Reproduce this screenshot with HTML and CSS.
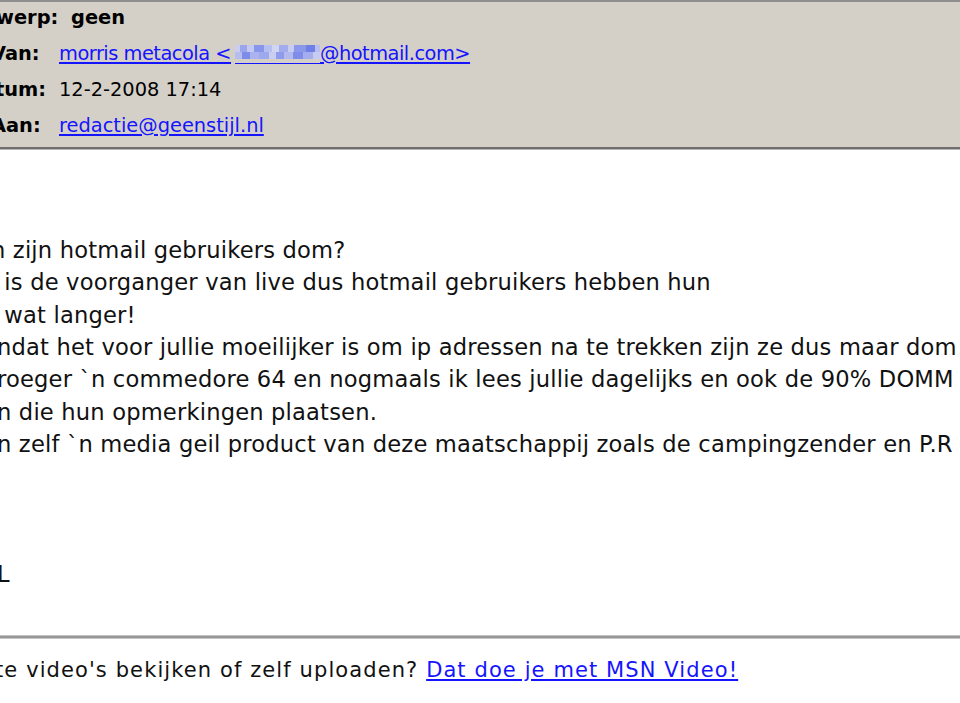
FILE: index.html
```html
<!DOCTYPE html>
<html lang="nl">
<head>
<meta charset="utf-8">
<title>geen</title>
<link rel="stylesheet" href="styles.css">
</head>
<body>
<div class="page">
  <header class="header">
    <div class="hrow hrow--subject"><span class="label label--inset-lg">werp:</span><span class="subject">geen</span></div>
    <div class="hrow"><span class="label">Van:</span><span class="value"><a class="link link--tight" href="#">morris metacola &lt;<span class="blur"></span>@hotmail.com&gt;</a></span></div>
    <div class="hrow"><span class="label label--inset">tum:</span><span class="value">12-2-2008 17:14</span></div>
    <div class="hrow"><span class="label">Aan:</span><span class="value"><a class="link" href="#">redactie@geenstijl.nl</a></span></div>
  </header>
  <main class="message">
    <div class="line line--shift">n zijn hotmail gebruikers dom?</div>
    <div class="line"> is de voorganger van live dus hotmail gebruikers hebben hun</div>
    <div class="line"> wat langer!</div>
    <div class="line">ndat het voor jullie moeilijker is om ip adressen na te trekken zijn ze dus maar dom</div>
    <div class="line">roeger `n commedore 64 en nogmaals ik lees jullie dagelijks en ook de 90% DOMM</div>
    <div class="line">n die hun opmerkingen plaatsen.</div>
    <div class="line">n zelf `n media geil product van deze maatschappij zoals de campingzender en P.R</div>
    <div class="line line--blank"></div>
    <div class="line line--blank"></div>
    <div class="line line--blank"></div>
    <div class="line">L</div>
  </main>
  <div class="separator"></div>
  <footer class="footer">te video's bekijken of zelf uploaden? <a class="footer-link" href="#">Dat doe je met MSN Video!</a></footer>
</div>
</body>
</html>
```
FILE: styles.css
```css
html, body {
  margin: 0;
  padding: 0;
  background: #ffffff;
}

body {
  width: 960px;
  height: 703px;
  overflow: hidden;
  font-family: "DejaVu Sans", Verdana, sans-serif;
  color: #000;
}

.page {
  width: 960px;
  overflow: hidden;
}

.header {
  background: #d4d0c8;
  box-shadow: inset 0 2px 0 #8f8f8f, 0 1px 0 #b4b4b4;
  border-bottom: 2px solid #6f6f6f;
  padding-bottom: 3px;
  font-size: 19.4px;
  line-height: 36px;
  position: relative;
}

.hrow {
  display: grid;
  grid-template-columns: 68px 1fr;
  margin-left: -9px;
  white-space: nowrap;
}

.hrow--subject {
  grid-template-columns: 80px 1fr;
}

.label {
  font-weight: bold;
}

.label--inset {
  padding-left: 4px;
}

.label--inset-lg {
  padding-left: 5px;
}

.subject {
  font-weight: bold;
}

.link {
  color: #1414ff;
  text-decoration: underline;
  text-decoration-thickness: 1.5px;
  text-underline-offset: 2px;
}

.link--tight {
  letter-spacing: -0.5px;
}

.blur {
  display: inline-block;
  width: 85px;
  height: 22px;
  vertical-align: -4px;
  margin: 0 0 0 4px;
  background:
    linear-gradient(#1414ff, #1414ff) left bottom / 100% 1.5px no-repeat,
    linear-gradient(90deg,
      #c9cdf0 0 6%, #9aa5ec 6% 14%, #c4c9f1 14% 22%, #8795ea 22% 34%,
      #b7bef0 34% 44%, #d2d5f0 44% 52%, #a1abee 52% 62%, #c8ccf1 62% 70%,
      #8a97ea 70% 84%, #6e7fe6 84% 94%, #b9c0f0 94% 100%) left 3px / 100% 7px no-repeat,
    linear-gradient(90deg,
      #b6bdf0 0 8%, #7d8ce8 8% 18%, #aab3ef 18% 28%, #9ea9ed 28% 40%,
      #c9cdf1 40% 48%, #8f9beb 48% 58%, #b1b9ef 58% 68%, #7f8de8 68% 80%,
      #a4aeee 80% 92%, #c6cbf1 92% 100%) left 10px / 100% 7px no-repeat;
}

.message {
  font-size: 22.6px;
  line-height: 32.45px;
  letter-spacing: 0.18px;
  padding-top: 84.6px;
  margin-left: -3px;
  color: #111;
}

.line {
  white-space: pre;
}

.line--shift {
  margin-left: -6px;
}

.line--blank {
  height: 32.45px;
}

.separator {
  margin-top: 44.4px;
  height: 2px;
  background: #979797;
  border-top: 1px solid #c2c2c2;
  border-bottom: 1px solid #c6c6c6;
}

.footer {
  padding-top: 14.7px;
  font-size: 21px;
  line-height: 32px;
  letter-spacing: 1.1px;
  margin-left: -5px;
  white-space: nowrap;
  color: #111;
}

.footer-link {
  color: #1414ff;
  text-decoration: underline;
  text-decoration-thickness: 1.5px;
  text-underline-offset: 2px;
}
```
